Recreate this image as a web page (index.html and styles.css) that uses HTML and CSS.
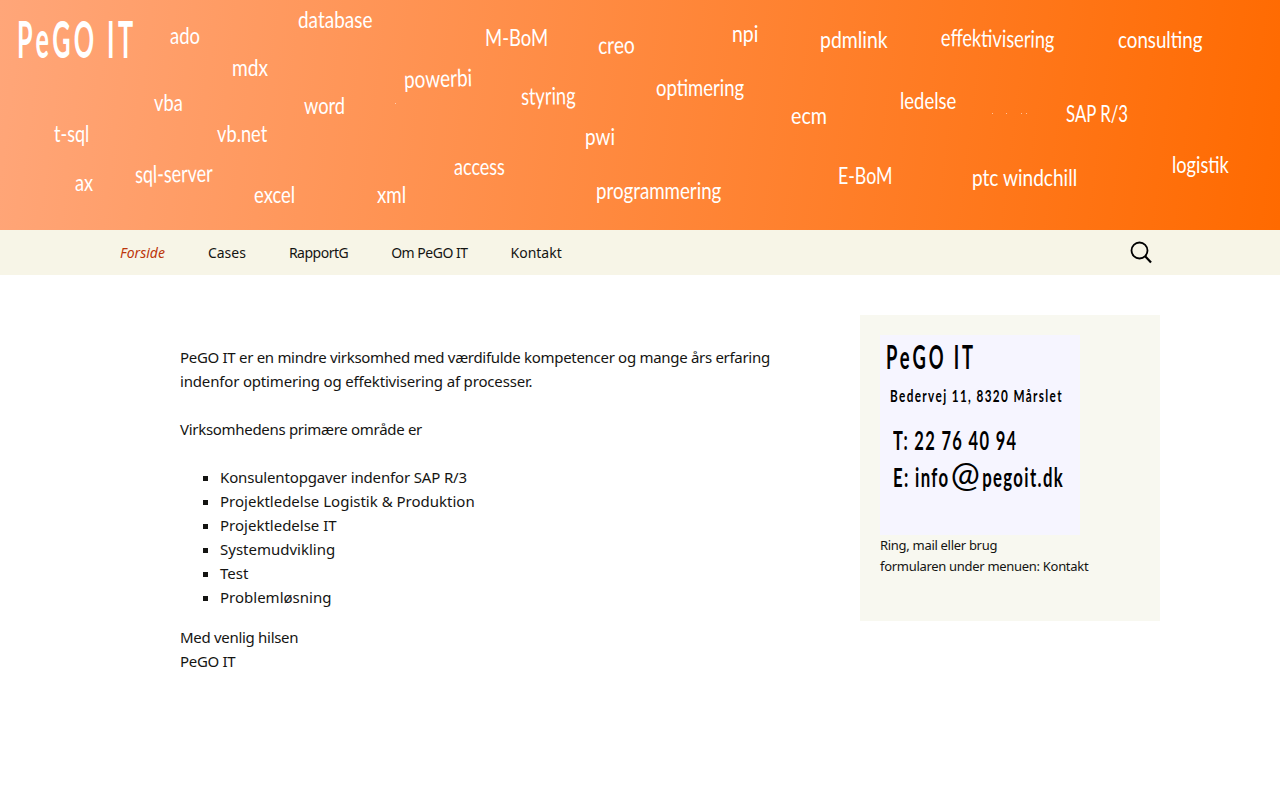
FILE: index.html
```html
<!DOCTYPE html>
<html lang="da">
<head>
<meta charset="utf-8">
<title>PeGO IT</title>
<link rel="stylesheet" href="styles.css">
</head>
<body>
<header class="banner">
  <span class="w logo">PeGO IT</span>
  <span class="w ado">ado</span>
  <span class="w database">database</span>
  <span class="w mdx">mdx</span>
  <span class="w mbom">M-BoM</span>
  <span class="w creo">creo</span>
  <span class="w npi">npi</span>
  <span class="w pdmlink">pdmlink</span>
  <span class="w effekt">effektivisering</span>
  <span class="w consulting">consulting</span>
  <span class="w powerbi">powerbi</span>
  <span class="w vba">vba</span>
  <span class="w word">word</span>
  <span class="w styring">styring</span>
  <span class="w optimering">optimering</span>
  <span class="w ecm">ecm</span>
  <span class="w ledelse">ledelse</span>
  <span class="w sap">SAP R/3</span>
  <span class="w tsql">t-sql</span>
  <span class="w vbnet">vb.net</span>
  <span class="w pwi">pwi</span>
  <span class="w ax">ax</span>
  <span class="w sqlserver">sql-server</span>
  <span class="w excel">excel</span>
  <span class="w xml">xml</span>
  <span class="w access">access</span>
  <span class="w programmering">programmering</span>
  <span class="w ebom">E-BoM</span>
  <span class="w ptc">ptc windchill</span>
  <span class="w logistik">logistik</span>
  <i class="dot d1"></i><i class="dot d2"></i><i class="dot d3"></i><i class="dot d4"></i><i class="dot d5"></i>
</header>
<nav class="navbar">
  <ul class="menu">
    <li class="menu-item current"><a href="#">Forside</a></li>
    <li class="menu-item"><a href="#">Cases</a></li>
    <li class="menu-item tight"><a href="#">RapportG</a></li>
    <li class="menu-item tight"><a href="#">Om PeGO IT</a></li>
    <li class="menu-item"><a href="#">Kontakt</a></li>
  </ul>
  <svg class="search-icon" width="24" height="24" viewBox="0 0 24 24" aria-label="Søg">
    <circle cx="10.5" cy="10.5" r="8" fill="none" stroke="#000" stroke-width="1.8"/>
    <path d="M16.2 16.2 L22 22.4" stroke="#000" stroke-width="2.2" fill="none"/>
  </svg>
</nav>
<div class="page">
  <main class="content">
    <p>PeGO IT er en mindre virksomhed med værdifulde kompetencer og mange års erfaring<br><span class="second">indenfor optimering og effektivisering af processer.</span><br><br>Virksomhedens primære område er</p>
    <ul class="services">
      <li class="first-service">Konsulentopgaver indenfor SAP R/3</li>
      <li>Projektledelse Logistik &amp; Produktion</li>
      <li>Projektledelse IT</li>
      <li>Systemudvikling</li>
      <li>Test</li>
      <li>Problemløsning</li>
    </ul>
    <p>Med venlig hilsen<br>PeGO IT</p>
  </main>
  <aside class="widget">
    <div class="card">
      <div class="card-text card-title">PeGO IT</div>
      <div class="card-text card-addr">Bedervej 11, 8320 Mårslet</div>
      <div class="card-text card-tel">T: 22 76 40 94</div>
      <div class="card-text card-mail">E: info<span class="at">@</span>pegoit.dk</div>
    </div>
    <p class="caption">Ring, mail eller brug<br>formularen under menuen: Kontakt</p>
  </aside>
</div>
</body>
</html>
```

FILE: styles.css
```css
* { box-sizing: border-box; }
html, body { margin: 0; padding: 0; }
body {
  background: #fff;
  color: #141412;
  font-family: "Noto Sans", "Lato", sans-serif;
  font-size: 15px;
  line-height: 24px;
}
.banner {
  position: relative;
  height: 230px;
  overflow: hidden;
  background: linear-gradient(97deg, #ffa679 0%, #ff6a00 100%);
}
.w {
  --sx: .77;
  --rot: 0deg;
  position: absolute;
  color: #fff;
  font-family: "Lato", sans-serif;
  font-size: 24px;
  line-height: 30px;
  white-space: nowrap;
  transform-origin: left center;
  transform: translateY(calc(-50% - 1px)) rotate(var(--rot)) scaleX(var(--sx));
}
.dot { position: absolute; width: 1px; height: 1px; background: rgba(255, 255, 255, .55); }
.d1 { left: 395px; top: 103px; }
.d2 { left: 992px; top: 113px; }
.d3 { left: 1006px; top: 113px; }
.d4 { left: 1021px; top: 113px; }
.d5 { left: 1026px; top: 113px; }
.logo { left: 17px; top: 39px; font-size: 52px; line-height: 60px; letter-spacing: 7px; --sx: .484; font-weight: 700; }
.ado { left: 170px; top: 36px; }
.database { left: 298px; top: 20px; --sx: .79; }
.mdx { left: 232px; top: 68px; --sx: .8; }
.mbom { left: 485px; top: 38px; }
.creo { left: 598px; top: 46px; --sx: .8; --rot: -1deg; }
.npi { left: 732px; top: 34px; --sx: .81; }
.pdmlink { left: 820px; top: 40px; --sx: .81; }
.effekt { left: 941px; top: 38px; --sx: .76; --rot: 1deg; }
.consulting { left: 1118px; top: 40px; --sx: .78; }
.powerbi { left: 404px; top: 80px; --sx: .79; --rot: -1.5deg; }
.vba { left: 154px; top: 103px; --sx: .76; }
.word { left: 304px; top: 106px; --sx: .76; }
.styring { left: 521px; top: 97px; --sx: .76; --rot: -1deg; }
.optimering { left: 656px; top: 88px; }
.ecm { left: 791px; top: 116px; --sx: .82; }
.ledelse { left: 900px; top: 101px; }
.sap { left: 1066px; top: 114px; --sx: .7; }
.tsql { left: 54px; top: 134px; --sx: .75; }
.vbnet { left: 217px; top: 134px; --sx: .76; }
.pwi { left: 585px; top: 137px; --sx: .79; }
.ax { left: 75px; top: 183px; --sx: .76; }
.sqlserver { left: 135px; top: 175px; --sx: .75; --rot: -1deg; }
.excel { left: 254px; top: 195px; }
.xml { left: 377px; top: 195px; --sx: .78; }
.access { left: 454px; top: 167px; --sx: .75; }
.programmering { left: 596px; top: 191px; --sx: .78; }
.ebom { left: 838px; top: 176px; --sx: .74; }
.ptc { left: 972px; top: 178px; --sx: .795; }
.logistik { left: 1172px; top: 165px; --sx: .76; }

.navbar {
  height: 45px;
  background: #f7f5e7;
  padding: 0 127px 0 100px;
  display: flex;
  align-items: center;
  justify-content: space-between;
}
.menu {
  display: flex;
  gap: 3px;
  list-style: none;
  margin: 0;
  padding: 0;
}
.menu-item a {
  display: block;
  padding: 0 20px;
  color: #141412;
  font-size: 14px;
  line-height: 45px;
  text-decoration: none;
}
.menu-item.tight a { letter-spacing: -.5px; }
.menu-item.current a { color: #bc360a; font-style: italic; }
.search-icon { display: block; margin-top: -2px; }

.page {
  width: 1040px;
  margin: 0 auto;
  padding-top: 40px;
  display: flex;
  justify-content: space-between;
  align-items: flex-start;
}
.content { width: 700px; padding: 30px 20px 0 60px; }
.content p { margin: 0; letter-spacing: -.3px; }
.content .second { letter-spacing: -.17px; }
.services {
  list-style: square;
  margin: 24px 0 16px;
  padding: 0 0 0 40px;
}
.first-service { letter-spacing: -.15px; }
.widget {
  width: 300px;
  height: 306px;
  padding: 20px;
  background: #f8f8f0;
}
.card {
  width: 200px;
  height: 200px;
  padding: 4px 6px 0;
  background: #f6f5ff;
  color: #000;
  font-family: "Lato", sans-serif;
  font-weight: 700;
  overflow: hidden;
}
.card-text { white-space: nowrap; transform-origin: left center; }
.card-title { font-size: 32px; line-height: 36px; letter-spacing: 5px; transform: scaleX(.574); }
.card-addr { font-size: 17px; line-height: 20px; letter-spacing: 2px; margin: 11px 0 0 4px; transform: scaleX(.69); }
.card-tel { font-size: 27px; line-height: 32px; letter-spacing: 2.2px; margin: 18px 0 0 7px; transform: scaleX(.61); }
.card-mail { font-size: 27px; line-height: 32px; letter-spacing: 2.2px; margin: 3px 0 0 7px; transform: scaleX(.62); }
.at {
  display: inline-block;
  margin: 0 20px 0 2px;
  font-size: 34px;
  font-weight: 400;
  line-height: 30px;
  transform: scaleX(1.65);
  transform-origin: left center;
}
.caption { margin: 0; font-size: 13px; line-height: 21px; letter-spacing: -.3px; }
```
